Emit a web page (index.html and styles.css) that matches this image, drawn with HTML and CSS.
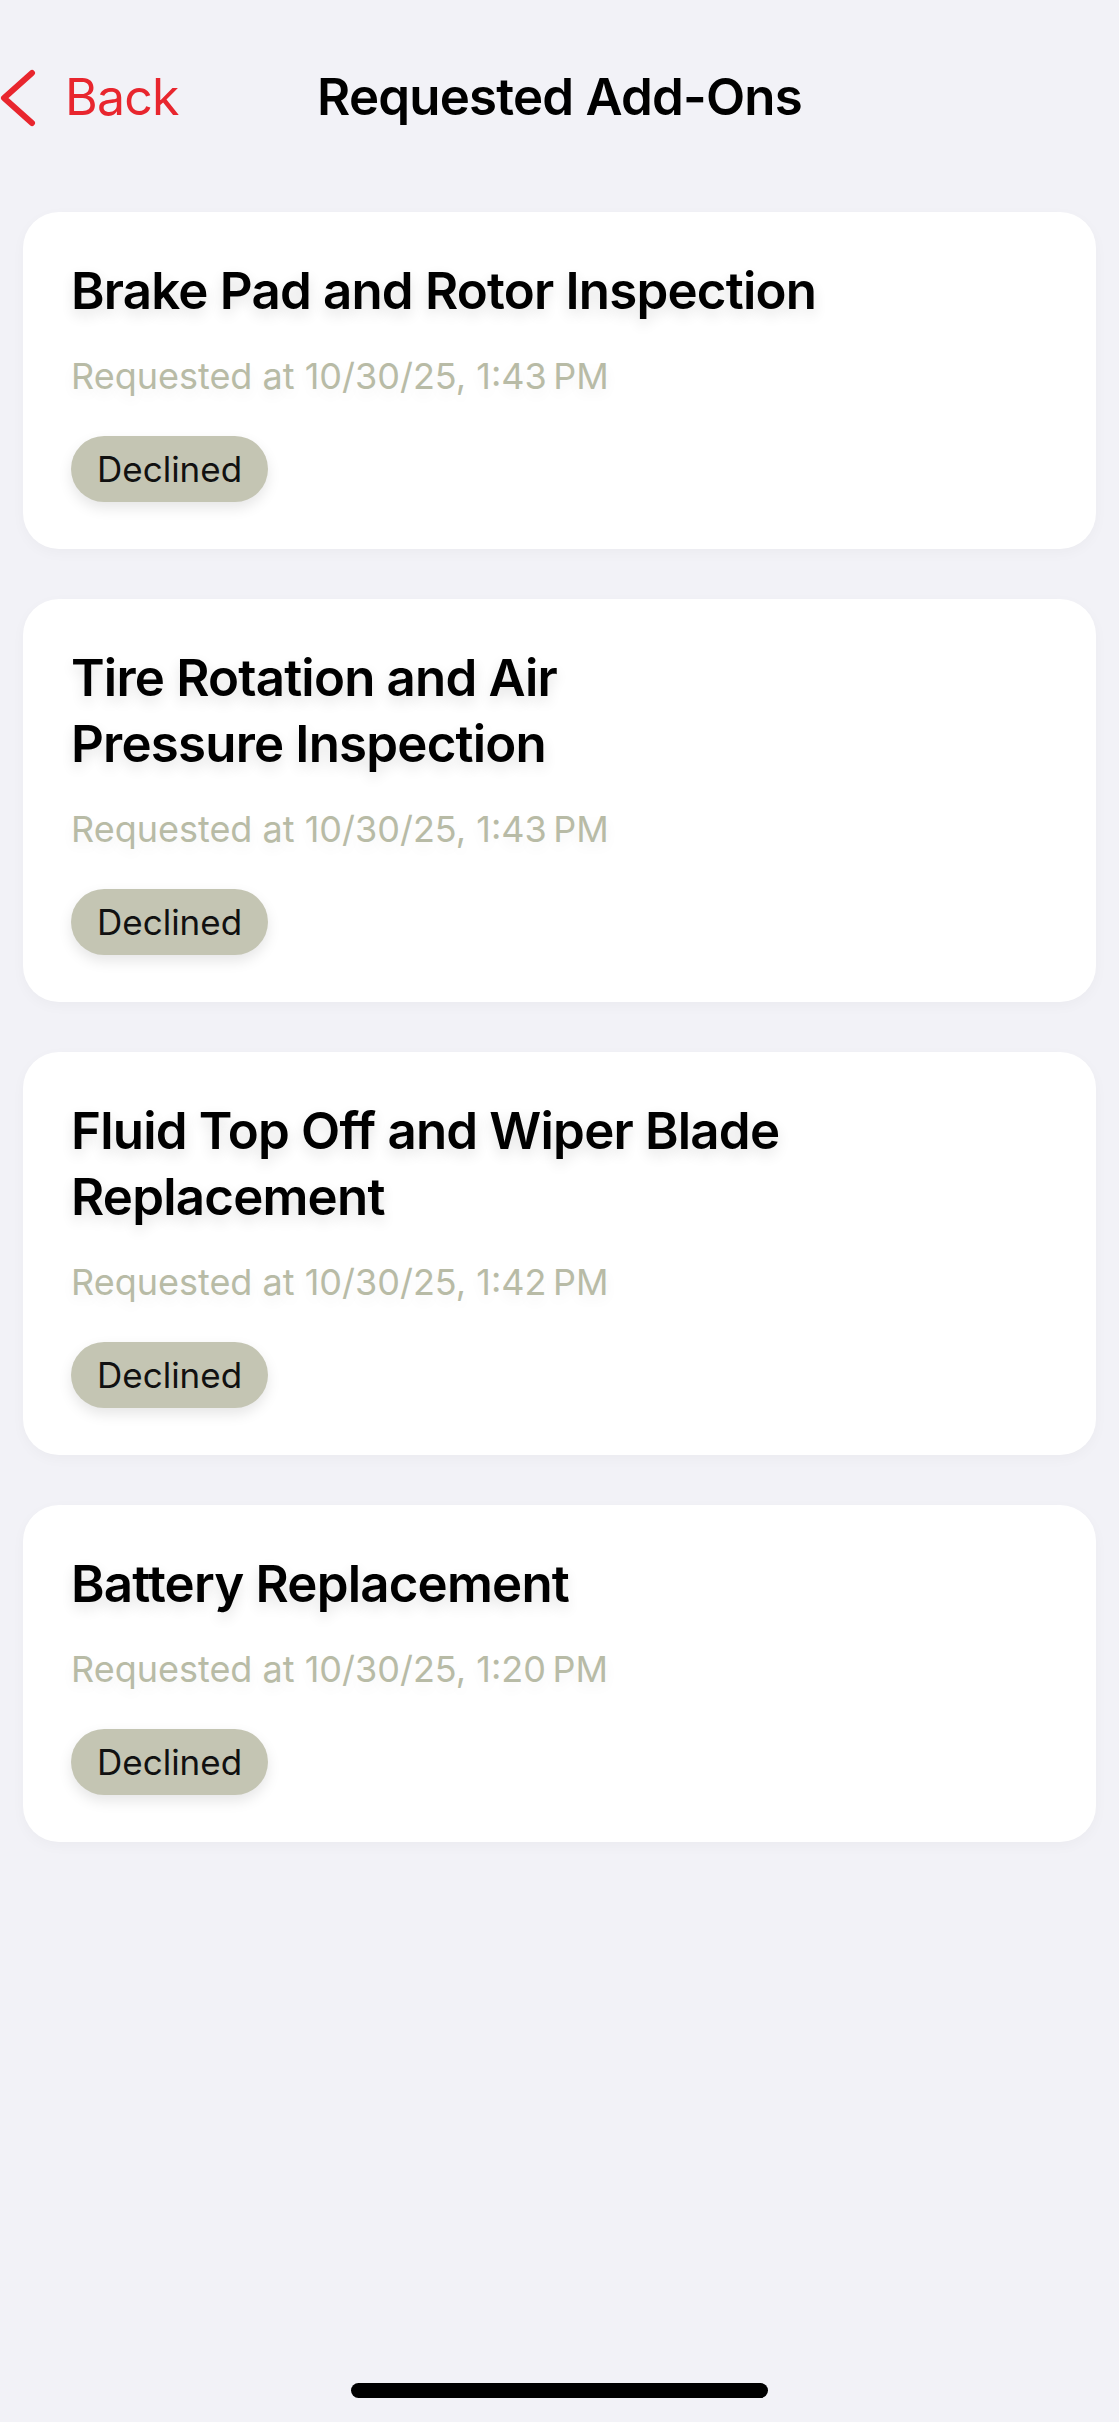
FILE: index.html
```html
<!doctype html>
<html>
	<head>
		<meta charset="utf-8">
		<title>Requested Add-Ons</title>
		<link rel="stylesheet" href="styles.css">
	</head>
	<body>
		<div class="nav">
			<a class="back" href="#">
				<svg class="chevron" width="38" height="62" viewBox="0 0 38 62">
					<path d="M32 7 L4 32 L32 57" fill="none" stroke="#e8262e" stroke-width="6" stroke-linecap="round" stroke-linejoin="round"/>
				</svg>
				<span>Back</span>
			</a>
			<div class="nav-title">Requested Add-Ons</div>
			<div></div>
		</div>

		<div class="list">
			<div class="card">
				<div class="card-title">Brake Pad and Rotor Inspection</div>
				<div class="card-date">Requested at 10/30/25, 1:43&#8239;PM</div>
				<span class="badge">Declined</span>
			</div>
			<div class="card">
				<div class="card-title">Tire Rotation and Air<br>Pressure Inspection</div>
				<div class="card-date">Requested at 10/30/25, 1:43&#8239;PM</div>
				<span class="badge">Declined</span>
			</div>
			<div class="card">
				<div class="card-title">Fluid Top Off and Wiper Blade<br>Replacement</div>
				<div class="card-date">Requested at 10/30/25, 1:42&#8239;PM</div>
				<span class="badge">Declined</span>
			</div>
			<div class="card">
				<div class="card-title">Battery Replacement</div>
				<div class="card-date">Requested at 10/30/25, 1:20&#8239;PM</div>
				<span class="badge">Declined</span>
			</div>
		</div>

		<div class="home-indicator"></div>
	</body>
</html>
```

FILE: styles.css
```css
html, body {
    margin: 0;
    padding: 0;
}
body {
    width: 1119px;
    height: 2422px;
    background: #f2f2f7;
    font-family: Inter, "Noto Sans", sans-serif;
    color: #000;
    overflow: hidden;
    position: relative;
}

.nav {
    display: grid;
    grid-template-columns: 1fr auto 1fr;
    align-items: center;
    padding-top: 64px;
    height: 66px;
}
.back {
    display: flex;
    align-items: center;
    gap: 27px;
    color: #e8262e;
    text-decoration: none;
    font-size: 50px;
    line-height: 66px;
    letter-spacing: -0.8px;
}
.chevron {
    display: block;
}
.nav-title {
    font-size: 51px;
    font-weight: 600;
    line-height: 66px;
    letter-spacing: -0.8px;
}

.list {
    display: flex;
    flex-direction: column;
    gap: 50px;
    margin: 82px 23px 0;
}
.card {
    background: #fff;
    border-radius: 36px;
    padding: 46px 48px 47px;
    box-shadow: 0 4px 14px rgba(0, 0, 0, 0.03);
}
.card-title {
    font-size: 51px;
    font-weight: 600;
    line-height: 66px;
    letter-spacing: -0.8px;
    text-shadow: 0 6px 14px rgba(0, 0, 0, 0.12);
}
.card-date {
    margin-top: 30px;
    font-size: 36px;
    line-height: 44px;
    color: #b8bba6;
    text-shadow: 0 6px 14px rgba(0, 0, 0, 0.06);
}
.badge {
    display: inline-block;
    margin-top: 38px;
    padding: 11px 26px;
    font-size: 35px;
    line-height: 44px;
    background: #c4c5b3;
    color: #111;
    border-radius: 33px;
    box-shadow: 0 6px 14px rgba(0, 0, 0, 0.1);
}

.home-indicator {
    position: absolute;
    left: 351px;
    top: 2383px;
    width: 417px;
    height: 15px;
    border-radius: 8px;
    background: #000;
}
```
